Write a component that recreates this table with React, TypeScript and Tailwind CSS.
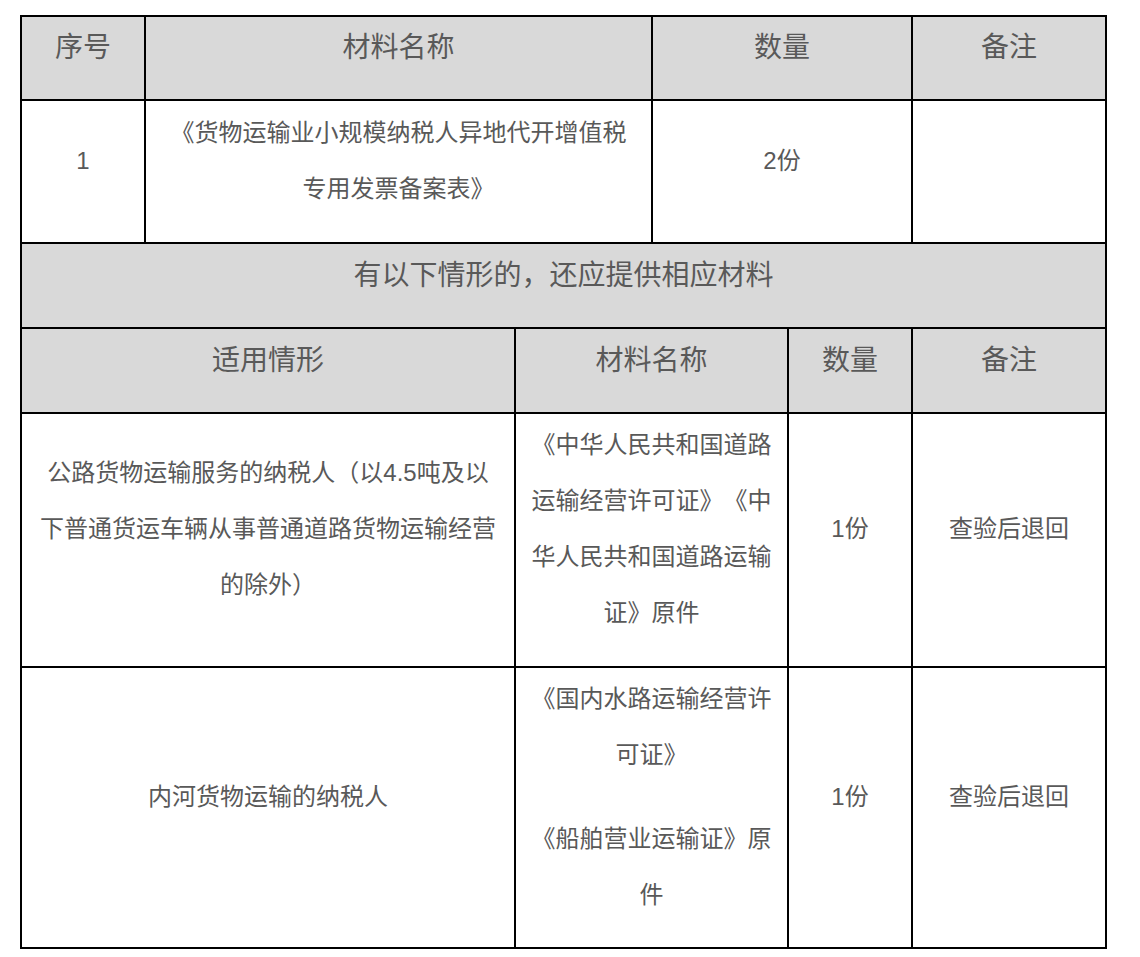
import React from 'react';

const FONT = "font-['Liberation_Sans','Noto_Sans_CJK_SC',sans-serif]";

type CellProps = {
  w: string;
  head?: boolean;
  children?: React.ReactNode;
};

function Cell({ w, head, children }: CellProps) {
  return (
    <div
      className={`${w} shrink-0 border-r-2 border-b-2 border-black flex flex-col items-center justify-center text-center px-2 ${
        head ? 'bg-[#d9d9d9] text-[28px] pb-[20px]' : 'bg-white text-[24px] pb-[22px]'
      } leading-[56px]`}
    >
      {children}
    </div>
  );
}

export default function App() {
  return (
    <div className={`min-h-[957px] bg-white pt-[15px] pl-[20px] ${FONT} text-[#595959] [text-spacing-trim:space-all]`}>
      <div className="w-[1087px] border-l-2 border-t-2 border-black">
        {/* Header */}
        <div className="flex h-[84px]">
          <Cell w="w-[124px]" head>序号</Cell>
          <Cell w="w-[507px]" head>材料名称</Cell>
          <Cell w="w-[260px]" head>数量</Cell>
          <Cell w="w-[194px]" head>备注</Cell>
        </div>

        {/* Row 1 */}
        <div className="flex h-[143px]">
          <Cell w="w-[124px]">1</Cell>
          <Cell w="w-[507px]">
            <p>
              《货物运输业小规模纳税人异地代开增值税
              <br />
              专用发票备案表》
            </p>
          </Cell>
          <Cell w="w-[260px]">2份</Cell>
          <Cell w="w-[194px]" />
        </div>

        {/* Section title */}
        <div className="flex h-[85px]">
          <Cell w="w-[1085px]" head>有以下情形的，还应提供相应材料</Cell>
        </div>

        {/* Sub header */}
        <div className="flex h-[85px]">
          <Cell w="w-[494px]" head>适用情形</Cell>
          <Cell w="w-[273px]" head>材料名称</Cell>
          <Cell w="w-[124px]" head>数量</Cell>
          <Cell w="w-[194px]" head>备注</Cell>
        </div>

        {/* Road transport */}
        <div className="flex h-[254px]">
          <Cell w="w-[494px]">
            <p>
              公路货物运输服务的纳税人（以4.5吨及以
              <br />
              下普通货运车辆从事普通道路货物运输经营
              <br />
              的除外）
            </p>
          </Cell>
          <Cell w="w-[273px]">
            <p>
              《中华人民共和国道路
              <br />
              运输经营许可证》《中
              <br />
              华人民共和国道路运输
              <br />
              证》原件
            </p>
          </Cell>
          <Cell w="w-[124px]">1份</Cell>
          <Cell w="w-[194px]">查验后退回</Cell>
        </div>

        {/* Inland waterway */}
        <div className="flex h-[281px]">
          <Cell w="w-[494px]">内河货物运输的纳税人</Cell>
          <Cell w="w-[273px]">
            <div className="flex flex-col gap-[28px]">
              <p>
                《国内水路运输经营许
                <br />
                可证》
              </p>
              <p>
                《船舶营业运输证》原
                <br />
                件
              </p>
            </div>
          </Cell>
          <Cell w="w-[124px]">1份</Cell>
          <Cell w="w-[194px]">查验后退回</Cell>
        </div>
      </div>
    </div>
  );
}
